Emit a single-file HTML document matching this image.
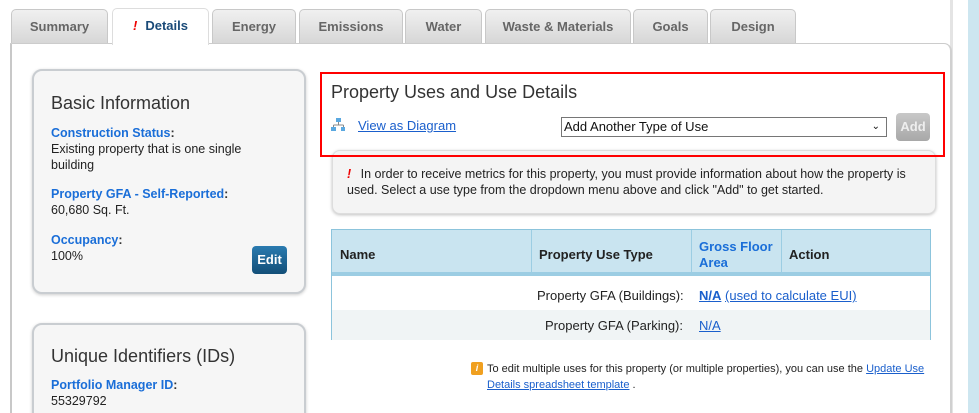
<!DOCTYPE html>
<html style="overflow:hidden;height:413px"><head><meta charset="utf-8"><style>
*{box-sizing:border-box;margin:0;padding:0}
body{width:979px;height:413px;overflow:hidden;background:#fff;font-family:"Liberation Sans",Arial,sans-serif;position:relative;font-size:12.5px;color:#222}
.a{position:absolute}
.tab{position:absolute;top:9px;height:35px;background:linear-gradient(#f0f0f0,#d6d6d6);border:1px solid #c8c8c8;border-bottom:none;border-radius:5px 5px 0 0;font-weight:bold;font-size:13px;color:#666;text-align:center;line-height:34px}
.card{position:absolute;background:#f6f6f6;border:2px solid #c9cdd1;border-radius:10px;box-shadow:0 1px 3px rgba(0,0,0,.2)}
.lbl{color:#1a6ed8;font-weight:bold;font-size:12.5px}
.lbl b{color:#333}
.h{font-size:18px;color:#333;position:absolute}
a{color:#1a5fcc;text-decoration:underline}
</style></head><body>
<div class="a" style="left:968px;top:0;width:11px;height:413px;background:#cde6f0"></div>
<div class="a" style="left:950px;top:0;width:3px;height:413px;background:#e4e4e4"></div>
<div class="tab" style="left:11px;width:97px">Summary</div>
<div class="tab" style="left:112px;width:97px;top:8px;height:37px;background:#fff;color:#1a4a78;z-index:3;border-color:#ddd"><span style="color:#e00;font-style:italic;margin-right:8px">!</span>Details</div>
<div class="tab" style="left:212px;width:84px">Energy</div>
<div class="tab" style="left:299px;width:104px">Emissions</div>
<div class="tab" style="left:405px;width:77px">Water</div>
<div class="tab" style="left:485px;width:146px">Waste &amp; Materials</div>
<div class="tab" style="left:633px;width:75px">Goals</div>
<div class="tab" style="left:710px;width:86px">Design</div>
<div class="a" style="left:10px;top:43px;width:942px;height:370px;background:#fff;border-left:2px solid #c8c8c8;border-top:1px solid #ccc;border-right:2px solid #d0d0d0;border-radius:0 8px 0 0;z-index:2"></div>
<div class="a" style="left:0;top:0;width:979px;height:413px;z-index:4;overflow:hidden">
<div class="card" style="left:32px;top:69px;width:274px;height:225px">
 <div class="h" style="left:17px;top:22px">Basic Information</div>
 <div class="a" style="left:17px;top:54px;line-height:16px"><span class="lbl">Construction Status<b>:</b></span><br>Existing property that is one single<br>building</div>
 <div class="a" style="left:17px;top:115px;line-height:16px"><span class="lbl">Property GFA - Self-Reported<b>:</b></span><br>60,680 Sq. Ft.</div>
 <div class="a" style="left:17px;top:161px;line-height:16px"><span class="lbl">Occupancy<b>:</b></span><br>100%</div>
 <div class="a" style="left:218px;top:175px;width:35px;height:28px;background:linear-gradient(#2a7bb0,#134f78);border-radius:4px;color:#fff;font-weight:bold;font-size:13px;text-align:center;line-height:28px">Edit</div>
</div>
<div class="card" style="left:32px;top:323px;width:274px;height:110px">
 <div class="h" style="left:17px;top:21px">Unique Identifiers (IDs)</div>
 <div class="a" style="left:17px;top:52px;line-height:16px"><span class="lbl">Portfolio Manager ID<b>:</b></span><br>55329792</div>
</div>
<div class="a" style="left:320px;top:72px;width:625px;height:85px;border:2px solid #f00;z-index:6"></div>
<div class="h" style="left:331px;top:82px">Property Uses and Use Details</div>
<svg class="a" style="left:331px;top:118px" width="14" height="14"><rect x="5" y="0" width="5" height="4" fill="#5aa8e0"/><path d="M7.5 4v3M2.5 7h10M2.5 7v2M12.5 7v2" stroke="#888" fill="none"/><rect x="0" y="9" width="5" height="4" fill="#5aa8e0"/><rect x="10" y="9" width="5" height="4" fill="#5aa8e0"/></svg>
<a class="a" style="left:358px;top:118px;font-size:13px">View as Diagram</a>
<div class="a" style="left:561px;top:117px;width:326px;height:20px;border:1px solid #767676;background:#fff;font-size:13px;line-height:18px;padding-left:2px;color:#111">Add Another Type of Use<span style="position:absolute;right:6px;font-size:10px">&#8964;</span></div>
<div class="a" style="left:896px;top:113px;width:34px;height:28px;background:linear-gradient(#c8c8c8,#a8a8a8);border-radius:4px;color:#eee;font-weight:bold;font-size:13px;text-align:center;line-height:28px">Add</div>
<div class="a" style="left:332px;top:150px;width:604px;height:64px;background:#f4f4f4;border:1px solid #ddd;border-radius:8px;box-shadow:0 1px 3px rgba(0,0,0,.25);padding:15px 20px 0 14px;font-size:12.5px;line-height:16px;color:#222"><span style="color:#e00;font-weight:bold;font-style:italic;margin-right:6px">!</span> In order to receive metrics for this property, you must provide information about how the property is used. Select a use type from the dropdown menu above and click "Add" to get started.</div>
<div class="a" style="left:331px;top:229px;width:600px;height:111px;border:1px solid #8cc4dc">
 <div class="a" style="left:0;top:0;width:598px;height:46px;background:#c9e4f0;border-bottom:4px solid #9ccde3"></div>
 <div class="a" style="left:199px;top:0;width:1px;height:46px;background:#9ccde3"></div>
 <div class="a" style="left:359px;top:0;width:1px;height:46px;background:#9ccde3"></div>
 <div class="a" style="left:449px;top:0;width:1px;height:46px;background:#9ccde3"></div>
 <div class="a" style="left:8px;top:17px;font-weight:bold;font-size:13px">Name</div>
 <div class="a" style="left:207px;top:17px;font-weight:bold;font-size:13px">Property Use Type</div>
 <div class="a" style="left:367px;top:9px;font-weight:bold;font-size:13px;color:#1a6ed8;line-height:16px">Gross Floor<br>Area</div>
 <div class="a" style="left:457px;top:17px;font-weight:bold;font-size:13px">Action</div>
 <div class="a" style="left:0;top:80px;width:598px;height:30px;background:#f0f4f5"></div>
 <div class="a" style="left:205px;top:58px;font-size:13px">Property GFA (Buildings):</div>
 <div class="a" style="left:367px;top:58px;font-size:13px"><a style="font-weight:bold">N/A</a> <a>(used to calculate EUI)</a></div>
 <div class="a" style="left:213px;top:88px;font-size:13px">Property GFA (Parking):</div>
 <div class="a" style="left:367px;top:88px;font-size:13px"><a>N/A</a></div>
</div>
<div class="a" style="left:471px;top:362px;width:12px;height:13px;background:#f0a020;border-radius:2px;color:#fff;font-size:9px;font-weight:bold;text-align:center;line-height:13px;font-style:italic">i</div>
<div class="a" style="left:487px;top:361px;width:450px;font-size:11px;line-height:16px;color:#222">To edit multiple uses for this property (or multiple properties), you can use the <a>Update Use Details spreadsheet template</a> .</div>
</div>
</body></html>
